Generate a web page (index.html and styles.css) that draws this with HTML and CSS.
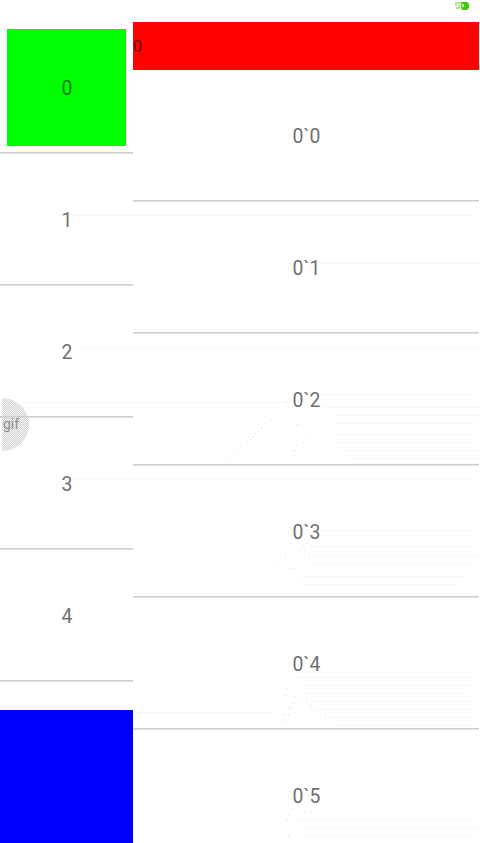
FILE: index.html
```html
<!DOCTYPE html>
<html lang="en">
<head>
<meta charset="utf-8">
<title>Linked lists</title>
<link rel="stylesheet" href="styles.css">
</head>
<body>
<div class="screen">
  <header class="status">
    <svg class="battery" width="16" height="10" viewBox="0 0 16 10"><path d="M1 2h3M1 4h2M2 7h3M5 1v7" stroke="#68d72f" fill="none"/><path d="M8 1h5l2 2v4l-2 2H8z" fill="#43c90f"/><path d="M6 1h3v1H6zM7 7h2v1H7zM7 2h1v5H7z" fill="#68d72f"/><path d="M8 3h2v3H8z" fill="#b5eb9a"/></svg>
  </header>
  <main class="panes">
    <section class="side">
      <div class="list">
        <div class="row"><div class="selected">0</div></div>
        <div class="row">1</div>
        <div class="row">2</div>
        <div class="row">3</div>
        <div class="row">4</div>
        <div class="row"></div>
      </div>
      <div class="footer"></div>
    </section>
    <section class="detail">
      <div class="heading">0</div>
      <div class="row">0`0</div>
      <div class="row">0`1</div>
      <div class="row">0`2</div>
      <div class="row">0`3</div>
      <div class="row">0`4</div>
      <div class="row">0`5</div>
    </section>
  </main>
  <svg class="dots" width="480" height="843" viewBox="0 0 480 843" fill="none" stroke-dasharray="1 3" shape-rendering="crispEdges">
    <g stroke="#f9d5f9">
      <path d="M74 215.5H478M320 263.5H478M76 348.5H478M22 402.5H290"/>
      <path d="M324 407.5H478M333 415.5H478M336 423.5H474M336 434.5H470M336 442.5H470M345 450.5H478M352 458.5H478"/>
      <path d="M323 530.5H478M311 546.5H478M309 556.5H478M312 564.5H470M303 576.5H465M306 584.5H462"/>
      <path d="M293 677.5H476M300 685.5H470M304 693.5H468M311 701.5H478M134 712.5H275M318 709.5H478M325 717.5H476M333 725.5H474"/>
      <path d="M298 820.5H478M304 828.5H478M307 836.5H478"/>
    </g>
    <g stroke="#f9d5f9" stroke-dasharray="1 6">
      <path d="M304 412L280 462M316 414L287 462M326 414L333 427M308 426H322M303 442H320M322 448H334M299 458H320"/>
      <path d="M292 542L268 590M304 544L276 592M307 543L302 569M294 568H306M291 584H302"/>
      <path d="M291 682L275 716M300 690L278 726M306 700L322 718M295 702L285 722"/>
      <path d="M293 808L278 838M304 811H312M300 826L286 838"/>
    </g>
    <g stroke="#d3f7d3">
      <path d="M322 394.5H478M74 479.5H478M227 462L292 398"/>
    </g>
  </svg>
  <div class="bubble">gif</div>
</div>
</body>
</html>
```
FILE: styles.css
```css
body {
  margin: 0;
  background: #fff;
  font-family: Roboto, "Liberation Sans", sans-serif;
  font-size: 19.4px;
  color: #707070;
}
.screen {
  position: relative;
  display: flex;
  flex-direction: column;
  width: 480px;
  height: 843px;
  overflow: hidden;
}
.status {
  display: flex;
  flex: none;
  justify-content: flex-end;
  box-sizing: border-box;
  height: 22px;
  padding: 1px 10px 0 0;
}
.panes {
  display: flex;
  flex: 1;
  min-height: 0;
}
.side {
  display: flex;
  flex-direction: column;
  width: 133px;
}
.list {
  flex: 1;
  min-height: 0;
  overflow: hidden;
}
.footer {
  flex: none;
  height: 133px;
  background: #00f;
}
.detail {
  flex: 1;
  overflow: hidden;
  padding-right: 1px;
}
.heading {
  display: flex;
  align-items: center;
  box-sizing: border-box;
  height: 48px;
  padding-top: 1px;
  background: #f00;
  color: #700000;
  font-size: 16px;
}
.row {
  display: flex;
  align-items: center;
  justify-content: center;
  box-sizing: border-box;
  height: 132px;
  padding: 1px 0 0 1px;
  background:
    repeating-linear-gradient(90deg, #c8c8c8 0 1px, #fafafa 1px 2px) 0 100% / 100% 1px no-repeat,
    repeating-linear-gradient(90deg, #d8d8d8 0 1px, #c4c4c4 1px 2px) 0 calc(100% - 1px) / 100% 1px no-repeat;
}
.selected {
  display: flex;
  align-items: center;
  justify-content: center;
  box-sizing: border-box;
  width: 119px;
  height: 117px;
  margin: 0 0 2px -1px;
  padding: 2px 0 0 1px;
  background: #0f0;
  color: #008000;
}
.dots {
  position: absolute;
  inset: 0;
  pointer-events: none;
}
.bubble {
  position: absolute;
  left: 2px;
  top: 398px;
  display: flex;
  align-items: center;
  box-sizing: border-box;
  width: 27px;
  height: 53px;
  padding: 0 0 2px 1px;
  border-radius: 0 27px 27px 0;
  background: repeating-conic-gradient(rgba(180, 190, 180, 0.65) 0 25%, rgba(245, 230, 245, 0.5) 0 50%) 0 0 / 2px 2px;
  color: #8c8c8c;
  font-size: 14px;
}
```
